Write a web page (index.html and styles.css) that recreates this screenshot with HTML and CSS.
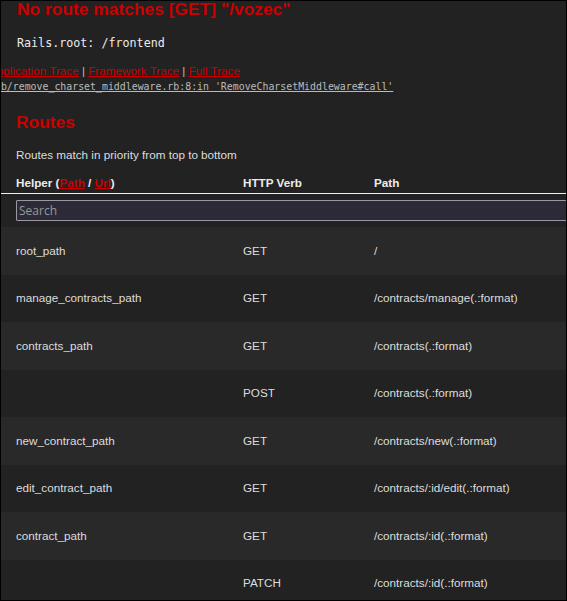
FILE: index.html
```html
<!DOCTYPE html>
<html>
<head>
<meta charset="utf-8">
<title>Action Controller: Exception caught</title>
<link rel="stylesheet" href="styles.css">
</head>
<body>
<div class="page">
  <h1 class="title">No route matches [GET] "/vozec"</h1>
  <pre class="root">Rails.root: /frontend</pre>
  <div class="trace-links"><a href="#">Application Trace</a> | <a href="#">Framework Trace</a> | <a href="#">Full Trace</a></div>
  <div class="trace-line"><a href="#">lib/remove_charset_middleware.rb:8:in 'RemoveCharsetMiddleware#call'</a></div>
  <h2 class="section">Routes</h2>
  <p class="note">Routes match in priority from top to bottom</p>
  <div class="routes">
    <div class="row head">
      <div>Helper (<a href="#">Path</a> / <a href="#">Url</a>)</div>
      <div>HTTP Verb</div>
      <div>Path</div>
    </div>
    <div class="search-row"><input class="search" type="search" placeholder="Search"></div>
    <div class="row route odd"><div>root_path</div><div>GET</div><div>/</div></div>
    <div class="row route"><div>manage_contracts_path</div><div>GET</div><div>/contracts/manage(.:format)</div></div>
    <div class="row route odd"><div>contracts_path</div><div>GET</div><div>/contracts(.:format)</div></div>
    <div class="row route"><div></div><div>POST</div><div>/contracts(.:format)</div></div>
    <div class="row route odd"><div>new_contract_path</div><div>GET</div><div>/contracts/new(.:format)</div></div>
    <div class="row route"><div>edit_contract_path</div><div>GET</div><div>/contracts/:id/edit(.:format)</div></div>
    <div class="row route odd"><div>contract_path</div><div>GET</div><div>/contracts/:id(.:format)</div></div>
    <div class="row route"><div></div><div>PATCH</div><div>/contracts/:id(.:format)</div></div>
  </div>
</div>
</body>
</html>
```

FILE: styles.css
```css
html, body {
  margin: 0;
  padding: 0;
  background: #222;
}
.page {
  box-sizing: border-box;
  width: 567px;
  height: 601px;
  border: 1px solid #000;
  background: #222;
  color: #ECECEC;
  font-family: "Liberation Sans", Arial, sans-serif;
  font-size: 11.7px;
  overflow: hidden;
}
.title {
  margin: -2px 0 0 0;
  padding-left: 16px;
  font-size: 17.4px;
  line-height: 20px;
  font-weight: bold;
  color: #C00;
  white-space: nowrap;
}
.root {
  margin: 16px 0 0 0;
  padding-left: 16px;
  font-family: "DejaVu Sans Mono", monospace;
  font-size: 11.7px;
  line-height: 16px;
  color: #ECECEC;
}
.trace-links {
  margin: 13px 0 0 -12px;
  line-height: 14px;
  color: #bbb;
  white-space: nowrap;
}
.trace-links a {
  color: #C00;
}
.trace-line {
  margin: 3px 0 0 -12px;
  font-family: "DejaVu Sans Mono", monospace;
  font-size: 9.9px;
  line-height: 12px;
  white-space: nowrap;
}
.trace-line a {
  color: #bbb;
}
.section {
  margin: 19px 0 0 0;
  padding-left: 15px;
  font-size: 17.4px;
  line-height: 20px;
  color: #C00;
}
.note {
  margin: 16px 0 0 0;
  padding-left: 15px;
  line-height: 14px;
  color: #ddd;
}
.routes {
  margin-top: 14px;
}
.row {
  display: grid;
  grid-template-columns: 227px 131px 1fr;
  padding-left: 15px;
  white-space: nowrap;
}
.head {
  font-weight: bold;
  line-height: 14px;
  padding-bottom: 3px;
  border-bottom: 1px solid #eee;
  color: #ECECEC;
}
.head a {
  color: #C00;
}
.search-row {
  padding: 6px 0 6px 15px;
  overflow: hidden;
}
.search {
  box-sizing: border-box;
  display: block;
  width: 600px;
  height: 21px;
  margin: 0;
  padding: 0 2px;
  border: 1px solid #9a98a6;
  border-radius: 1px;
  background: #2b2a36;
  color: #ddd;
  font-family: "Open Sans", "DejaVu Sans", sans-serif;
  font-size: 12px;
  outline: none;
}
.search::placeholder {
  color: #999;
}
.route {
  height: 47.5px;
  align-items: center;
  color: #ddd;
  line-height: 14px;
}
.route.odd {
  background: #292929;
}
```
